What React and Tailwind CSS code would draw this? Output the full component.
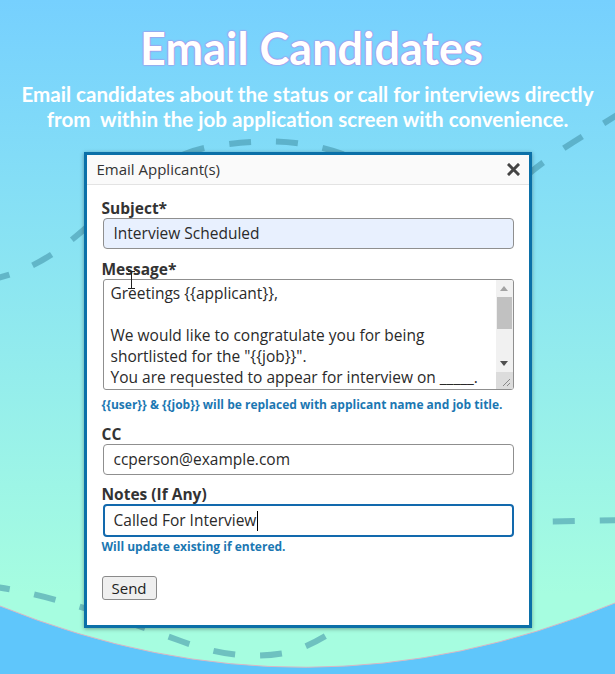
import React from "react";

const bodyFont = { fontFamily: '"Open Sans", "Noto Sans", sans-serif' };

const messageLines = [
  "Greetings {{applicant}},",
  "\u00a0",
  "We would like to congratulate you for being",
  'shortlisted for the "{{job}}".',
  "You are requested to appear for interview on _____.",
];

function Backdrop() {
  return (
    <svg className="absolute inset-0" width="615" height="674" viewBox="0 0 615 674">
      {/* bowl at the bottom */}
      <path d="M0,606 Q307,730 615,603 L615,674 L0,674 Z" fill="#5fc6fb" />
      <path d="M0,606 Q307,730 615,603" fill="none" stroke="#d9b7c4" strokeWidth="1" />
      {/* dashed trail */}
      <g fill="none" stroke="#3f8fa6" strokeOpacity="0.55" strokeWidth="6" strokeDasharray="22 25">
        <path d="M-12,280 C90,262 120,160 215,146 C300,132 360,150 420,200 C480,240 505,195 531,172 C555,152 590,132 635,104" />
        <path d="M-12,586 C40,592 110,615 178,640 C215,654 250,660 290,652 C360,632 420,540 525,522 L630,520" />
      </g>
    </svg>
  );
}

function Label({ children }) {
  return <div className="text-[15.5px] font-bold leading-[20px] text-[#333]">{children}</div>;
}

function Hint({ children }) {
  return <div className="text-[12px] font-bold leading-[16px] text-[#1b77b2]">{children}</div>;
}

function MessageBox() {
  return (
    <div className="relative flex h-[111px] w-[411px] overflow-hidden rounded-[3px] border border-[#8f8f8f] bg-white">
      <div className="flex-1 pl-[7px] pt-[3px] text-[15.5px] leading-[21px] text-[#2a2a2a]">
        {messageLines.map((l, i) => (
          <div key={i} className="whitespace-nowrap">{l}</div>
        ))}
      </div>
      <div className="flex w-[17px] flex-col bg-[#f1f1f1]">
        <div className="flex h-[17px] items-center justify-center">
          <svg width="8" height="5" viewBox="0 0 8 5"><path d="M0,5 L4,0 L8,5 Z" fill="#a3a3a3" /></svg>
        </div>
        <div className="mx-[1px] h-[32px] bg-[#c1c1c1]" />
        <div className="flex-1" />
        <div className="flex h-[17px] items-center justify-center">
          <svg width="8" height="5" viewBox="0 0 8 5"><path d="M0,0 L8,0 L4,5 Z" fill="#505050" /></svg>
        </div>
        <div className="flex h-[17px] items-end justify-end bg-[#dcdcdc] p-[2px]">
          <svg width="10" height="10" viewBox="0 0 10 10">
            <path d="M9,2 L2,9 M9,6 L6,9" stroke="#888" strokeWidth="1" />
          </svg>
        </div>
      </div>
    </div>
  );
}

function TextField({ value, focused, filled, caret }) {
  return (
    <div
      className={`flex w-[411px] items-center rounded-[4px] text-[15.5px] text-[#2a2a2a] ${
        focused
          ? "h-[33px] border-2 border-[#1269ad] px-[9px]"
          : "h-[31px] border border-[#8f8f8f] px-[10px]"
      } ${filled ? "bg-[#e8f0fe]" : "bg-white"}`}
    >
      <span>{value}</span>
      {caret && <span className="ml-[1px] inline-block h-[20px] w-[1px] bg-black" />}
    </div>
  );
}

export default function App() {
  return (
    <div className="relative h-[674px] w-[615px] overflow-hidden bg-linear-to-b from-[#76d0fe] from-0% to-[#a6fde0] to-88%">
      <Backdrop />

      <div className="relative flex flex-col items-center">
        <h1
          className="ml-[8px] mt-[22px] text-[45px] font-bold leading-[52px] text-white [text-shadow:0_0_2px_#c468dc,0_0_1px_#c468dc]"
          style={{ fontFamily: 'Lato, "Open Sans", sans-serif' }}
        >
          Email Candidates
        </h1>
        <p
          className="mt-[8px] whitespace-nowrap text-center text-[20.6px] font-bold leading-[25px] text-white"
          style={{ fontFamily: 'Lato, "Open Sans", sans-serif' }}
        >
          Email candidates about the status or call for interviews directly
          <br />
          from{"\u00a0"} within the job application screen with convenience.
        </p>

        <div
          className="mt-[20px] w-[448px] border-[3px] border-[#0b70a8] bg-white shadow-[0_1px_4px_rgba(0,0,0,0.35)]"
          style={bodyFont}
        >
          <div className="flex h-[30px] items-center justify-between border-b border-[#e3e3e3] bg-[#fafafa] pl-[10px] pr-[9px]">
            <span className="text-[15px] text-[#333]">Email Applicant(s)</span>
            <svg width="13" height="13" viewBox="0 0 13 13">
              <path d="M2,2 L11,11 M11,2 L2,11" stroke="#444" strokeWidth="3" strokeLinecap="square" />
            </svg>
          </div>

          <div className="relative pb-[25px] pl-[15px] pr-[14px] pt-[13px]">
            <Label>Subject*</Label>
            <div className="pl-[1px]">
              <TextField value="Interview Scheduled" filled />
            </div>

            <div className="mt-[10px]">
              <Label>Message*</Label>
            </div>
            <div className="pl-[1px]">
              <MessageBox />
            </div>
            <div className="mt-[7px]">
              <Hint>{"{{user}} & {{job}} will be replaced with applicant name and job title."}</Hint>
            </div>

            <div className="mt-[11px]">
              <Label>CC</Label>
            </div>
            <div className="pl-[1px]">
              <TextField value="ccperson@example.com" />
            </div>

            <div className="mt-[9px]">
              <Label>Notes (If Any)</Label>
            </div>
            <div className="pl-[1px]">
              <TextField value="Called For Interview" focused caret />
            </div>
            <div className="mt-[2px]">
              <Hint>Will update existing if entered.</Hint>
            </div>

            <button className="mt-[21px] h-[24px] rounded-[3px] border border-[#8a8a8a] bg-[#efefef] px-[9px] text-[15px] leading-[22px] text-[#222]">
              Send
            </button>

            {/* mouse pointer resting over the message label */}
            <svg className="absolute left-[41px] top-[86px]" width="7" height="18" viewBox="0 0 7 18">
              <path d="M0,0.5 L7,0.5 M3.5,0.5 L3.5,17.5 M0,17.5 L7,17.5" stroke="#222" strokeWidth="1" />
            </svg>
          </div>
        </div>
      </div>
    </div>
  );
}
